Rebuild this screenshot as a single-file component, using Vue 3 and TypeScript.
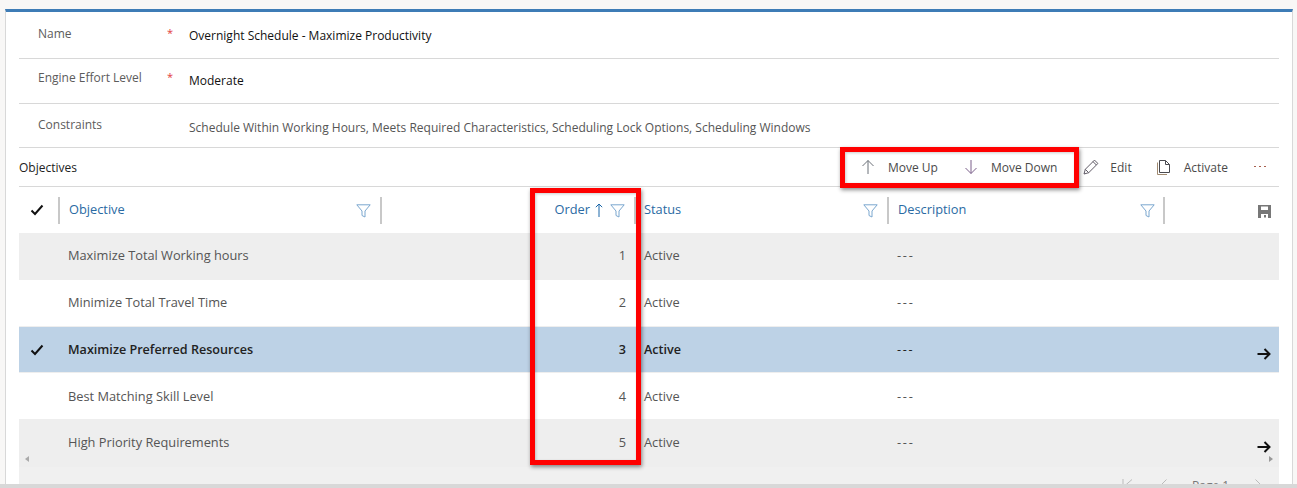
<script setup lang="ts">
interface Row { name: string; order: number; tone: string; arrow: boolean }
const rows: Row[] = [
  { name: 'Maximize Total Working hours', order: 1, tone: 'gray', arrow: false },
  { name: 'Minimize Total Travel Time', order: 2, tone: 'white', arrow: false },
  { name: 'Maximize Preferred Resources', order: 3, tone: 'sel', arrow: true },
  { name: 'Best Matching Skill Level', order: 4, tone: 'white', arrow: false },
  { name: 'High Priority Requirements', order: 5, tone: 'last', arrow: true },
]
const columns = [
  { key: 'obj', label: 'Objective' },
  { key: 'ord', label: 'Order' },
  { key: 'sta', label: 'Status' },
  { key: 'des', label: 'Description' },
]
</script>

<template>
  <div class="page">
    <div class="panel">
      <section class="form">
        <div class="field f1">
          <span class="label">Name</span><span class="req">*</span>
          <span class="value strong">Overnight Schedule - Maximize Productivity</span>
        </div>
        <div class="field f2">
          <span class="label">Engine Effort Level</span><span class="req">*</span>
          <span class="value strong">Moderate</span>
        </div>
        <div class="field f3">
          <span class="label">Constraints</span><span class="req"></span>
          <span class="value">Schedule Within Working Hours, Meets Required Characteristics, Scheduling Lock Options, Scheduling Windows</span>
        </div>
      </section>

      <div class="toolbar">
        <span class="title">Objectives</span>
        <div class="actions">
          <button class="action up">
            <svg width="14" height="16" viewBox="0 0 14 16"><path d="M7 15V1.500M1.500 7 7 1.500 12.500 7" fill="none" stroke="#6b7078" stroke-width="1"/></svg>
            <span>Move Up</span>
          </button>
          <button class="action down">
            <svg width="14" height="16" viewBox="0 0 14 16"><path d="M7 1v13.500M1.500 9 7 14.500 12.500 9" fill="none" stroke="#7a5f8a" stroke-width="1"/></svg>
            <span>Move Down</span>
          </button>
          <button class="action edit">
            <svg width="16" height="16" viewBox="0 0 16 16"><path d="M1 15 2.300 10.300 11.500 1.100 14.900 4.500 5.700 13.700ZM2.300 10.300 5.700 13.700M10 2.600 13.400 6" fill="none" stroke="#5f5a66" stroke-width="1"/></svg>
            <span>Edit</span>
          </button>
          <button class="action activate">
            <svg width="13" height="15" viewBox="0 0 13 15"><path d="M2.500 .5H8.500L12.500 4.500V12.500H2.500ZM8.500 .5V4.500H12.500" fill="none" stroke="#4a4a50"/><path d="M.5 2.500V14.500H10" fill="none" stroke="#a08a70"/></svg>
            <span>Activate</span>
          </button>
          <span class="more"><i></i><i></i><i></i></span>
        </div>
      </div>

      <div class="grid">
        <div class="head">
          <div class="check-cell">
            <svg width="14" height="12" viewBox="0 0 14 12"><path d="M1.500 6.500 5 10 12.500 1.500" fill="none" stroke="#111" stroke-width="2"/></svg>
          </div>
          <div v-for="c in columns" :key="c.key" class="hcell" :class="c.key">
            <span class="hlabel">{{ c.label }}</span>
            <svg v-if="c.key === 'ord'" class="sort" width="8" height="14" viewBox="0 0 8 14"><path d="M4 14V1M.8 4.200 4 1 7.200 4.200" fill="none" stroke="#1a66a8"/></svg>
            <svg class="filter" width="15" height="14" viewBox="0 0 15 14"><path d="M.8.800H14.200L9 7V13L6 11.500V7Z" fill="none" stroke="#7ba7cf"/></svg>
          </div>
          <div class="save-cell">
            <svg width="13" height="13" viewBox="0 0 13 13"><path fill="#777" fill-rule="evenodd" d="M0 0H13V13H0ZM3 1.500V5H10V1.500ZM3 9V13H10V9ZM6 10H8V12.500H6Z"/></svg>
          </div>
        </div>

        <div v-for="r in rows" :key="r.order" class="row" :class="[r.tone, 'r' + r.order]">
          <div class="check-cell">
            <svg v-if="r.tone === 'sel'" width="14" height="12" viewBox="0 0 14 12"><path d="M1.500 6.500 5 10 12.500 1.500" fill="none" stroke="#111" stroke-width="2"/></svg>
          </div>
          <div class="cell obj">{{ r.name }}</div>
          <div class="cell ord">{{ r.order }}</div>
          <div class="cell sta">Active</div>
          <div class="cell des">---</div>
          <div class="arrow-cell">
            <svg v-if="r.arrow" width="14" height="12" viewBox="0 0 14 12"><path d="M.5 6H12.500M7.500 1 12.500 6 7.500 11" fill="none" stroke="#111" stroke-width="2"/></svg>
          </div>
        </div>

        <div class="pager">
          <svg class="pg first" width="11" height="12" viewBox="0 0 11 12"><path d="M1 0V12M10 .5 2.500 7" fill="none" stroke="#bbb"/></svg>
          <svg class="pg prev" width="8" height="12" viewBox="0 0 8 12"><path d="M7.500 .5 1 7" fill="none" stroke="#bbb"/></svg>
          <span class="page-text">Page 1</span>
          <svg class="pg next" width="8" height="12" viewBox="0 0 8 12"><path d="M.5 .5 7 7" fill="none" stroke="#bbb"/></svg>
        </div>
      </div>

      <span class="scroll-arrow left"></span>
      <span class="scroll-arrow right"></span>
      <div class="callout callout-actions"></div>
      <div class="callout callout-order"></div>
    </div>
    <div class="bottom"></div>
  </div>
</template>

<style>
html, body { margin: 0; padding: 0; overflow: hidden; background: #f8f7f6; }
</style>

<style scoped>
.page {
  width: 1297px;
  height: 488px;
  box-sizing: border-box;
  padding: 9px 4px 0 5px;
  position: relative;
  overflow: hidden;
  background: #f8f7f6;
  font-family: "Open Sans", "Noto Sans", sans-serif;
  font-size: 12px;
  color: #444;
}
.panel {
  width: 1288px;
  height: 475px;
  box-sizing: border-box;
  background: #fff;
  border-top: 3px solid #3e7cb6;
  border-left: 1px solid #d8d8d8;
  border-right: 1px solid #d8d8d8;
  padding: 0 13px;
  overflow: hidden;
}
.form { display: flex; flex-direction: column; }
.field {
  display: flex;
  border-bottom: 1px solid #d8d8d8;
  box-sizing: border-box;
}
.f1 { height: 47px; padding-top: 14px; }
.f2 { height: 45px; padding-top: 11px; }
.f3 { height: 44px; padding-top: 13px; }
.label { width: 129px; padding-left: 19px; color: #5c5c5c; line-height: 16px; flex: none; }
.req { width: 22px; color: #e23b3b; line-height: 16px; flex: none; font-size: 11px; margin-top: -1px; }
.value { line-height: 16px; color: #555; margin-top: 3px; white-space: nowrap; }
.f1 .value { margin-top: 2px; }
.f2 .value { margin-top: 3px; }
.value.strong { color: #111; }
.toolbar {
  height: 39px;
  box-sizing: border-box;
  border-bottom: 1px solid #d8d8d8;
  display: flex;
  align-items: center;
  justify-content: space-between;
}
.title { color: #222; }
.actions { display: flex; align-items: center; height: 100%; }
.action {
  border: 0;
  background: none;
  padding: 0;
  font: inherit;
  color: #4a4a4a;
  display: flex;
  align-items: center;
  white-space: nowrap;
}
.action span { line-height: 16px; padding-top: 2px; }
.up { margin-right: 26px; gap: 13px; }
.down { margin-right: 26px; gap: 13px; }
.edit { margin-right: 25px; gap: 11px; }
.activate { gap: 14px; margin-right: 26px; }
.more { display: flex; gap: 3px; width: 25px; box-sizing: border-box; padding-bottom: 2px; }
.more i { width: 2px; height: 1px; background: #a8604f; display: block; }
.grid { display: flex; flex-direction: column; font-size: 12.800px; color: #555; }
.head { display: flex; height: 46px; box-sizing: border-box; align-items: center; }
.check-cell { width: 39px; flex: none; display: flex; justify-content: center; box-sizing: border-box; padding-right: 4px; }
.hcell {
  height: 27px;
  flex: none;
  display: flex;
  align-items: center;
  box-sizing: border-box;
  border-left: 2px solid #c8c8c8;
  color: #2a6aa3;
  position: relative;
}
.hcell.obj { width: 322px; padding-left: 9px; }
.hcell.ord { width: 254px; justify-content: flex-end; padding-right: 15px; }
.hcell.sta { width: 253px; padding-left: 8px; }
.hcell.des { width: 276px; padding-left: 9px; }
.hlabel { margin-top: -2px; }
.filter { position: absolute; right: 9px; top: 7px; }
.hcell.des .filter { right: 8px; }
.hcell.ord .hlabel { margin-right: 5px; }
.sort { margin-right: 16px; }
.save-cell { flex: 1; height: 27px; border-left: 2px solid #c8c8c8; display: flex; justify-content: flex-end; align-items: center; padding: 2px 8px 0 0; box-sizing: border-box; }
.row {
  display: flex;
  align-items: center;
  box-sizing: border-box;
}
.r1 { height: 47px; padding-bottom: 3px; }
.r2 { height: 46px; padding-bottom: 3px; }
.r3 { height: 47px; }
.r4 { height: 46px; padding-bottom: 1px; }
.r5 { height: 48px; padding-bottom: 2px; }
.row.gray { background: #eeeeee; }
.row.white { background: #fff; }
.row.sel { background: #bdd2e6; border-top: 1px solid #eee; border-bottom: 1px solid #eee; color: #222; font-weight: 600; font-size: 12.600px; }
.row.last { background: #eeeeee; }
.cell { flex: none; white-space: nowrap; box-sizing: border-box; }
.cell.obj { width: 322px; padding-left: 10px; }
.cell.ord { width: 253px; padding-right: 7px; text-align: right; }
.cell.sta { width: 254px; padding-left: 11px; }
.cell.des { width: 268px; padding-left: 10px; letter-spacing: 1.700px; font-weight: 400; }
.arrow-cell { flex: 1; display: flex; justify-content: flex-end; padding: 8px 8px 0 0; box-sizing: border-box; }
.r5 .arrow-cell { padding-top: 10px; }
.pager { height: 20px; background: #f0f0f0; display: flex; justify-content: flex-end; position: relative; }
.page-text { color: #777; line-height: 16px; font-size: 12px; position: absolute; left: 1173px; top: 11px; }
.pg { position: absolute; top: 12px; }
.pg.first { left: 1103px; }
.pg.prev { left: 1140px; }
.pg.next { left: 1236px; }
.scroll-arrow { position: absolute; top: 456px; width: 0; height: 0; border-top: 3.500px solid transparent; border-bottom: 3.500px solid transparent; }
.scroll-arrow.left { left: 25px; border-right: 4px solid #aaa; }
.scroll-arrow.right { left: 1269px; border-left: 4px solid #999; }
.callout { position: absolute; box-sizing: border-box; border: 5px solid #ff0000; box-shadow: 1px 2px 4px rgba(0, 0, 0, .45), inset 1px 1px 3px rgba(0, 0, 0, .2); pointer-events: none; }
.callout-actions { left: 840px; top: 147px; width: 239px; height: 41px; }
.callout-order { left: 530px; top: 188px; width: 111px; height: 277px; }
.bottom { position: absolute; left: 0; right: 0; bottom: 0; height: 4px; background: #d8d8d8; }
</style>
